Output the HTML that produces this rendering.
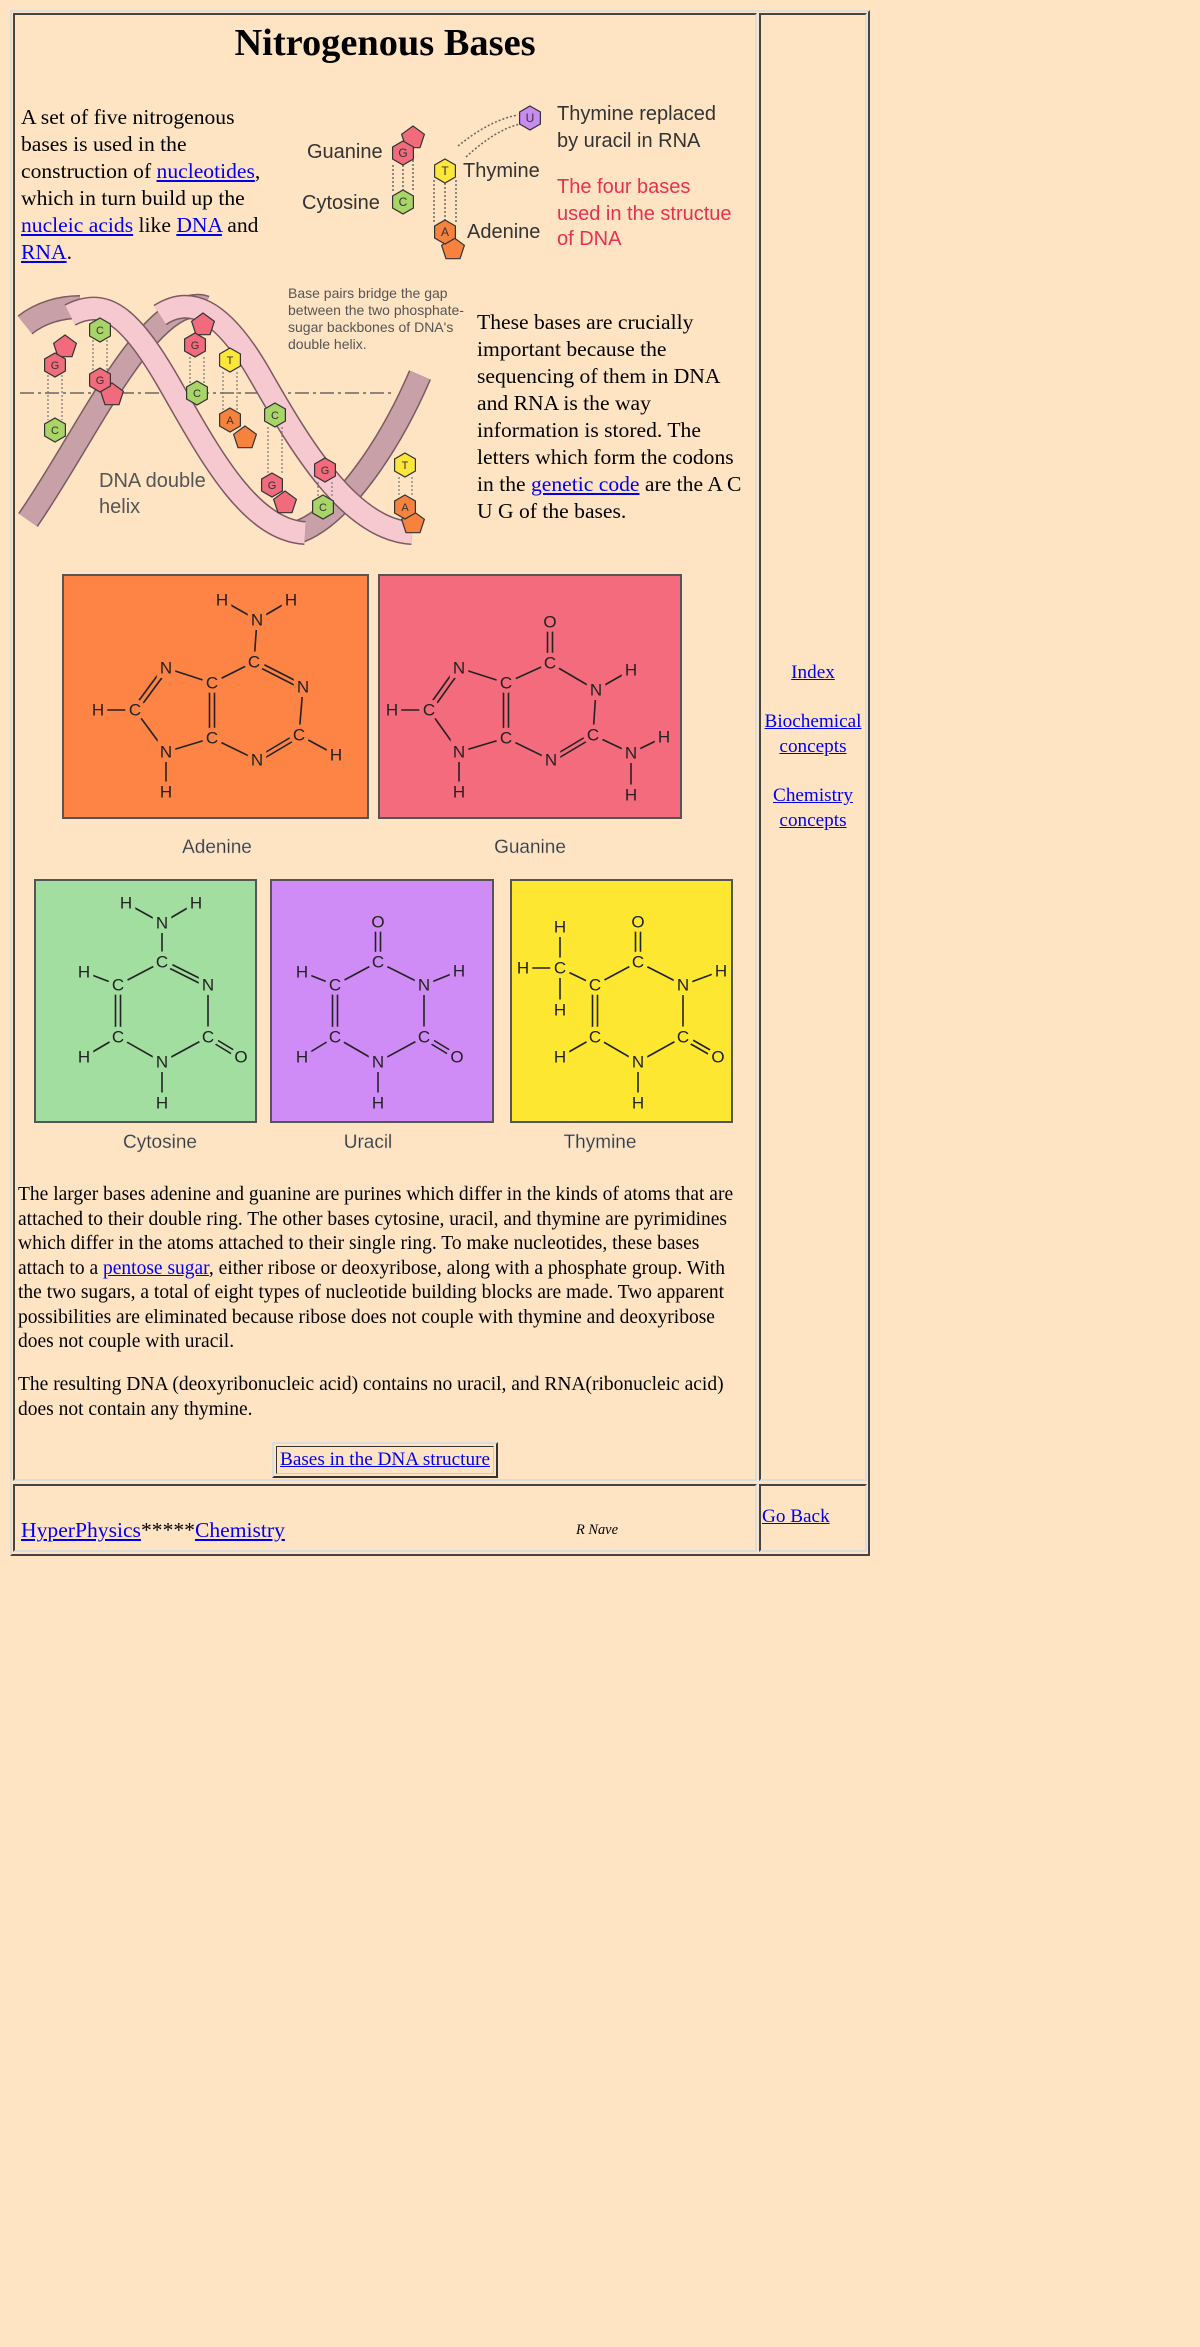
<!DOCTYPE html>
<html><head><meta charset="utf-8"><style>
html,body{margin:0;padding:0;background:#FFE4C4;}
body{width:1200px;height:2347px;position:relative;font-family:"Liberation Serif",serif;color:#000;overflow:hidden}
a{color:#0000EE;text-decoration:underline}
.abs{position:absolute;white-space:nowrap}
.outer{position:absolute;left:10px;top:10px;width:856px;height:1542px;border:2px solid;border-color:#dcdcdc #444 #444 #dcdcdc}
.cell{position:absolute;border:2px solid;border-color:#444 #dcdcdc #dcdcdc #444;box-sizing:border-box}
svg text{font-family:"Liberation Sans",sans-serif}
</style></head><body>
<div class="outer"></div>
<div class="cell" style="left:13px;top:13px;width:744px;height:1468px"></div>
<div class="cell" style="left:759px;top:13px;width:108px;height:1468px"></div>
<div class="cell" style="left:13px;top:1484px;width:744px;height:68px"></div>
<div class="cell" style="left:759px;top:1484px;width:108px;height:68px"></div>

<div class="abs" style="left:13px;width:744px;top:20px;text-align:center;font-size:38.4px;font-weight:bold;line-height:46px">Nitrogenous Bases</div>

<div class="abs" style="left:21px;top:104px;font-size:21.6px;line-height:27px">A set of five nitrogenous<br>bases is used in the<br>construction of <a>nucleotides</a>,<br>which in turn build up the<br><a>nucleic acids</a> like <a>DNA</a> and<br><a>RNA</a>.</div>

<div class="abs" style="left:477px;top:309px;font-size:21.6px;line-height:27px">These bases are crucially<br>important because the<br>sequencing of them in DNA<br>and RNA is the way<br>information is stored. The<br>letters which form the codons<br>in the <a>genetic code</a> are the A C<br>U G of the bases.</div>

<div class="abs" style="left:18px;top:1183px;font-size:19.5px;line-height:24.5px">The larger bases adenine and guanine are purines which differ in the kinds of atoms that are<br>attached to their double ring. The other bases cytosine, uracil, and thymine are pyrimidines<br>which differ in the atoms attached to their single ring. To make nucleotides, these bases<br>attach to a <a>pentose sugar</a>, either ribose or deoxyribose, along with a phosphate group. With<br>the two sugars, a total of eight types of nucleotide building blocks are made. Two apparent<br>possibilities are eliminated because ribose does not couple with thymine and deoxyribose<br>does not couple with uracil.</div>
<div class="abs" style="left:18px;top:1373px;font-size:19.5px;line-height:24.5px">The resulting DNA (deoxyribonucleic acid) contains no uracil, and RNA(ribonucleic acid)<br>does not contain any thymine.</div>

<div class="abs" style="left:272px;top:1442px;width:226px;height:36px;box-sizing:border-box;border:2px solid;border-color:#dcdcdc #333 #333 #dcdcdc"><div style="position:absolute;left:2px;top:2px;right:2px;bottom:2px;border:1px solid;border-color:#333 #ccc #ccc #333"></div></div>
<div class="abs" style="left:272px;width:226px;top:1448px;text-align:center;font-size:19.2px;line-height:24px"><a>Bases in the DNA structure</a></div>

<div class="abs" style="left:759px;width:108px;top:661px;text-align:center;font-size:19.2px;line-height:24.5px"><a>Index</a></div>
<div class="abs" style="left:759px;width:108px;top:710px;text-align:center;font-size:19.2px;line-height:24.5px"><a>Biochemical<br>concepts</a></div>
<div class="abs" style="left:759px;width:108px;top:784px;text-align:center;font-size:19.2px;line-height:24.5px"><a>Chemistry<br>concepts</a></div>

<div class="abs" style="left:21px;top:1516px;font-size:21.6px;line-height:28px"><a>HyperPhysics</a>*****<a>Chemistry</a></div>
<div class="abs" style="left:576px;top:1520px;font-size:14.4px;line-height:20px;font-style:italic">R Nave</div>
<div class="abs" style="left:762px;top:1505px;font-size:19.2px;line-height:24px"><a>Go Back</a></div>

<svg style="position:absolute;left:0;top:0" width="1200" height="1200" viewBox="0 0 1200 1200">
<defs>
<polygon id="hx" points="0,-12 10.4,-6 10.4,6 0,12 -10.4,6 -10.4,-6" stroke="#333" stroke-width="1.2"/>
<polygon id="pt" points="0,-12 11.4,-3.7 7,9.7 -7,9.7 -11.4,-3.7" stroke="#333" stroke-width="1.2"/>
</defs>
<g font-size="20" fill="#333">
<text x="307" y="158">Guanine</text>
<text x="302" y="209">Cytosine</text>
<text x="463" y="177">Thymine</text>
<text x="467" y="238">Adenine</text>
<text x="557" y="120">Thymine replaced</text>
<text x="557" y="147">by uracil in RNA</text>
<g fill="#e8304f"><text x="557" y="193">The four bases</text><text x="557" y="220">used in the structue</text><text x="557" y="245">of DNA</text></g>
</g>
<g stroke="#666" stroke-width="1.5" stroke-dasharray="2,2" fill="none">
<line x1="393" y1="165" x2="393" y2="192"/><line x1="403" y1="165" x2="403" y2="190"/><line x1="413" y1="160" x2="413" y2="192"/>
<line x1="434" y1="180" x2="434" y2="222"/><line x1="445" y1="183" x2="445" y2="220"/><line x1="456" y1="180" x2="456" y2="222"/>
<path d="M458 146 Q490 120 518 115"/><path d="M466 157 Q495 130 520 124"/>
</g>
<use href="#pt" x="413" y="138" fill="#f26b7c"/><use href="#hx" x="403" y="153" fill="#f26b7c"/>
<use href="#hx" x="403" y="202" fill="#a8d468"/>
<use href="#hx" x="445" y="171" fill="#fde63a"/>
<use href="#pt" x="453" y="249" fill="#f7823d"/><use href="#hx" x="445" y="232" fill="#f7823d"/>
<use href="#hx" x="530" y="118" fill="#c88cf0"/>
<g font-size="12" fill="#333" text-anchor="middle"><text x="403" y="157">G</text><text x="403" y="206">C</text><text x="445" y="175">T</text><text x="445" y="236">A</text><text x="530" y="122">U</text></g>

<g transform="translate(20,275)">
<line x1="0" y1="118" x2="375" y2="118" stroke="#666" stroke-width="1.5" stroke-dasharray="14,4,3,4"/>
<g fill="none" stroke-linecap="butt">
<path d="M5 50 C20 38 40 32 60 32" stroke="#7a5a60" stroke-width="24"/><path d="M5 50 C20 38 40 32 60 32" stroke="#c8a0a8" stroke-width="21"/>
<path d="M8 245 C60 170 110 60 160 35 C172 30 180 30 185 32" stroke="#7a5a60" stroke-width="24"/><path d="M8 245 C60 170 110 60 160 35 C172 30 180 30 185 32" stroke="#c8a0a8" stroke-width="21"/>
<path d="M275 258 C320 245 370 170 400 100" stroke="#7a5a60" stroke-width="24"/><path d="M275 258 C320 245 370 170 400 100" stroke="#c8a0a8" stroke-width="21"/>
<path d="M50 40 C85 22 110 40 150 110 S230 255 285 258" stroke="#7a5a60" stroke-width="24"/><path d="M50 40 C85 22 110 40 150 110 S230 255 285 258" stroke="#f6c8cf" stroke-width="21"/>
<path d="M140 40 C168 22 200 30 240 100 S330 255 392 258" stroke="#7a5a60" stroke-width="24"/><path d="M140 40 C168 22 200 30 240 100 S330 255 392 258" stroke="#f6c8cf" stroke-width="21"/>
</g>
<g stroke="#777" stroke-width="1.2" stroke-dasharray="2,2">
<line x1="28" y1="100" x2="28" y2="145"/><line x1="42" y1="100" x2="42" y2="145"/>
<line x1="73" y1="65" x2="73" y2="95"/><line x1="87" y1="65" x2="87" y2="95"/>
<line x1="170" y1="82" x2="170" y2="108"/><line x1="184" y1="82" x2="184" y2="108"/>
<line x1="203" y1="97" x2="203" y2="135"/><line x1="217" y1="97" x2="217" y2="135"/>
<line x1="248" y1="152" x2="248" y2="198"/><line x1="262" y1="152" x2="262" y2="198"/>
<line x1="298" y1="207" x2="298" y2="222"/><line x1="312" y1="207" x2="312" y2="222"/>
<line x1="379" y1="202" x2="379" y2="222"/><line x1="392" y1="202" x2="392" y2="222"/>
</g>
<use href="#pt" x="45" y="72" fill="#f26b7c"/><use href="#hx" x="35" y="90" fill="#f26b7c"/>
<use href="#hx" x="80" y="55" fill="#a8d468"/>
<use href="#pt" x="92" y="120" fill="#f26b7c"/><use href="#hx" x="80" y="105" fill="#f26b7c"/>
<use href="#hx" x="35" y="155" fill="#a8d468"/>
<use href="#pt" x="183" y="50" fill="#f26b7c"/><use href="#hx" x="175" y="70" fill="#f26b7c"/>
<use href="#hx" x="177" y="118" fill="#a8d468"/>
<use href="#hx" x="210" y="85" fill="#fde63a"/>
<use href="#pt" x="225" y="163" fill="#f7823d"/><use href="#hx" x="210" y="145" fill="#f7823d"/>
<use href="#hx" x="255" y="140" fill="#a8d468"/>
<use href="#pt" x="265" y="228" fill="#f26b7c"/><use href="#hx" x="252" y="210" fill="#f26b7c"/>
<use href="#hx" x="305" y="195" fill="#f26b7c"/>
<use href="#hx" x="303" y="232" fill="#a8d468"/>
<use href="#hx" x="385" y="190" fill="#fde63a"/>
<use href="#pt" x="393" y="248" fill="#f7823d"/><use href="#hx" x="385" y="232" fill="#f7823d"/>
<g font-size="11" fill="#333" text-anchor="middle">
<text x="35" y="94">G</text><text x="80" y="59">C</text><text x="80" y="109">G</text><text x="35" y="159">C</text><text x="175" y="74">G</text><text x="177" y="122">C</text><text x="210" y="89">T</text><text x="210" y="149">A</text><text x="255" y="144">C</text><text x="252" y="214">G</text><text x="305" y="199">G</text><text x="303" y="236">C</text><text x="385" y="194">T</text><text x="385" y="236">A</text>
</g>
<g font-size="14" fill="#555"><text x="268" y="23">Base pairs bridge the gap</text><text x="268" y="40">between the two phosphate-</text><text x="268" y="57">sugar backbones of DNA's</text><text x="268" y="74">double helix.</text></g>
<g font-size="20" fill="#555"><text x="79" y="212">DNA double</text><text x="79" y="238">helix</text></g>
</g>

<g font-size="17" fill="#222" text-anchor="middle" dominant-baseline="central" stroke-linecap="round">
<g transform="translate(63,575)">
<rect x="0" y="0" width="305" height="243" fill="#fd8444" stroke="#555" stroke-width="2"/>
<g stroke="#222" stroke-width="1.6">
<line x1="194" y1="45" x2="159" y2="25"/><line x1="194" y1="45" x2="228" y2="25"/><line x1="194" y1="45" x2="191" y2="87"/>
<line x1="190" y1="89" x2="239" y2="114"/><line x1="192" y1="85" x2="241" y2="110"/>
<line x1="240" y1="112" x2="236" y2="160"/><line x1="236" y1="160" x2="273" y2="180"/>
<line x1="237" y1="162" x2="195" y2="187"/><line x1="235" y1="158" x2="193" y2="183"/>
<line x1="194" y1="185" x2="149" y2="163"/>
<line x1="146.5" y1="108" x2="146.5" y2="163"/><line x1="151.5" y1="108" x2="151.5" y2="163"/>
<line x1="149" y1="108" x2="191" y2="87"/><line x1="149" y1="108" x2="103" y2="93"/>
<line x1="105" y1="94.5" x2="74" y2="136.5"/><line x1="101" y1="91.5" x2="70" y2="133.5"/>
<line x1="72" y1="135" x2="35" y2="135"/><line x1="72" y1="135" x2="103" y2="177"/>
<line x1="103" y1="177" x2="149" y2="163"/><line x1="103" y1="177" x2="103" y2="217"/>
</g>
<g stroke="#fd8444" stroke-width="9" paint-order="stroke">
<text x="159" y="25">H</text><text x="228" y="25">H</text><text x="194" y="45">N</text><text x="191" y="87">C</text><text x="240" y="112">N</text><text x="236" y="160">C</text><text x="273" y="180">H</text><text x="194" y="185">N</text><text x="149" y="163">C</text><text x="149" y="108">C</text><text x="103" y="93">N</text><text x="72" y="135">C</text><text x="35" y="135">H</text><text x="103" y="177">N</text><text x="103" y="217">H</text>
</g>
</g>
<g transform="translate(379,575)">
<rect x="0" y="0" width="302" height="243" fill="#f46b7d" stroke="#555" stroke-width="2"/>
<g stroke="#222" stroke-width="1.6">
<line x1="168.5" y1="47" x2="168.5" y2="87"/><line x1="173.5" y1="47" x2="173.5" y2="87"/>
<line x1="171" y1="88" x2="217" y2="115"/><line x1="217" y1="115" x2="252" y2="95"/>
<line x1="217" y1="115" x2="214" y2="160"/><line x1="214" y1="160" x2="252" y2="178"/>
<line x1="252" y1="178" x2="285" y2="162"/><line x1="252" y1="178" x2="252" y2="220"/>
<line x1="215" y1="162" x2="173" y2="187"/><line x1="213" y1="158" x2="171" y2="183"/>
<line x1="172" y1="185" x2="127" y2="163"/>
<line x1="124.5" y1="108" x2="124.5" y2="163"/><line x1="129.5" y1="108" x2="129.5" y2="163"/>
<line x1="127" y1="108" x2="171" y2="88"/><line x1="127" y1="108" x2="80" y2="93"/>
<line x1="82" y1="94.5" x2="52" y2="136.5"/><line x1="78" y1="91.5" x2="48" y2="133.5"/>
<line x1="50" y1="135" x2="13" y2="135"/><line x1="50" y1="135" x2="80" y2="177"/>
<line x1="80" y1="177" x2="127" y2="163"/><line x1="80" y1="177" x2="80" y2="217"/>
</g>
<g stroke="#f46b7d" stroke-width="9" paint-order="stroke">
<text x="171" y="47">O</text><text x="171" y="88">C</text><text x="217" y="115">N</text><text x="252" y="95">H</text><text x="214" y="160">C</text><text x="252" y="178">N</text><text x="285" y="162">H</text><text x="252" y="220">H</text><text x="172" y="185">N</text><text x="127" y="163">C</text><text x="127" y="108">C</text><text x="80" y="93">N</text><text x="50" y="135">C</text><text x="13" y="135">H</text><text x="80" y="177">N</text><text x="80" y="217">H</text>
</g>
</g>

<g transform="translate(35,880)">
<rect x="0" y="0" width="221" height="242" fill="#a2dea0" stroke="#555" stroke-width="2"/>
<g stroke="#222" stroke-width="1.6">
<line x1="127" y1="43" x2="91" y2="23"/><line x1="127" y1="43" x2="161" y2="23"/><line x1="127" y1="43" x2="127" y2="82"/>
<line x1="126" y1="84" x2="172" y2="107"/><line x1="128" y1="80" x2="174" y2="103"/>
<line x1="173" y1="105" x2="173" y2="157"/>
<line x1="172" y1="159" x2="205" y2="179"/><line x1="174" y1="155" x2="207" y2="175"/>
<line x1="173" y1="157" x2="127" y2="182"/><line x1="127" y1="182" x2="127" y2="223"/>
<line x1="127" y1="182" x2="83" y2="157"/><line x1="83" y1="157" x2="49" y2="177"/>
<line x1="80.5" y1="105" x2="80.5" y2="157"/><line x1="85.5" y1="105" x2="85.5" y2="157"/>
<line x1="83" y1="105" x2="49" y2="92"/><line x1="83" y1="105" x2="127" y2="82"/>
</g>
<g stroke="#a2dea0" stroke-width="9" paint-order="stroke">
<text x="91" y="23">H</text><text x="161" y="23">H</text><text x="127" y="43">N</text><text x="127" y="82">C</text><text x="173" y="105">N</text><text x="173" y="157">C</text><text x="206" y="177">O</text><text x="127" y="182">N</text><text x="127" y="223">H</text><text x="83" y="157">C</text><text x="49" y="177">H</text><text x="83" y="105">C</text><text x="49" y="92">H</text>
</g>
</g>
<g transform="translate(271,880)">
<rect x="0" y="0" width="222" height="242" fill="#d08cf6" stroke="#555" stroke-width="2"/>
<g stroke="#222" stroke-width="1.6">
<line x1="104.5" y1="42" x2="104.5" y2="82"/><line x1="109.5" y1="42" x2="109.5" y2="82"/>
<line x1="107" y1="82" x2="153" y2="105"/><line x1="153" y1="105" x2="188" y2="91"/>
<line x1="153" y1="105" x2="153" y2="157"/>
<line x1="152" y1="159" x2="185" y2="179"/><line x1="154" y1="155" x2="187" y2="175"/>
<line x1="153" y1="157" x2="107" y2="182"/><line x1="107" y1="182" x2="107" y2="223"/>
<line x1="107" y1="182" x2="64" y2="157"/><line x1="64" y1="157" x2="31" y2="177"/>
<line x1="61.5" y1="105" x2="61.5" y2="157"/><line x1="66.5" y1="105" x2="66.5" y2="157"/>
<line x1="64" y1="105" x2="31" y2="92"/><line x1="64" y1="105" x2="107" y2="82"/>
</g>
<g stroke="#d08cf6" stroke-width="9" paint-order="stroke">
<text x="107" y="42">O</text><text x="107" y="82">C</text><text x="153" y="105">N</text><text x="188" y="91">H</text><text x="153" y="157">C</text><text x="186" y="177">O</text><text x="107" y="182">N</text><text x="107" y="223">H</text><text x="64" y="157">C</text><text x="31" y="177">H</text><text x="64" y="105">C</text><text x="31" y="92">H</text>
</g>
</g>
<g transform="translate(511,880)">
<rect x="0" y="0" width="221" height="242" fill="#fee731" stroke="#555" stroke-width="2"/>
<g stroke="#222" stroke-width="1.6">
<line x1="124.5" y1="42" x2="124.5" y2="82"/><line x1="129.5" y1="42" x2="129.5" y2="82"/>
<line x1="127" y1="82" x2="172" y2="105"/><line x1="172" y1="105" x2="210" y2="91"/>
<line x1="172" y1="105" x2="172" y2="157"/>
<line x1="171" y1="159" x2="206" y2="179"/><line x1="173" y1="155" x2="208" y2="175"/>
<line x1="172" y1="157" x2="127" y2="182"/><line x1="127" y1="182" x2="127" y2="223"/>
<line x1="127" y1="182" x2="84" y2="157"/><line x1="84" y1="157" x2="49" y2="177"/>
<line x1="81.5" y1="105" x2="81.5" y2="157"/><line x1="86.5" y1="105" x2="86.5" y2="157"/>
<line x1="84" y1="105" x2="49" y2="88"/><line x1="84" y1="105" x2="127" y2="82"/>
<line x1="49" y1="88" x2="49" y2="47"/><line x1="49" y1="88" x2="49" y2="130"/><line x1="49" y1="88" x2="12" y2="88"/>
</g>
<g stroke="#fee731" stroke-width="9" paint-order="stroke">
<text x="127" y="42">O</text><text x="127" y="82">C</text><text x="172" y="105">N</text><text x="210" y="91">H</text><text x="172" y="157">C</text><text x="207" y="177">O</text><text x="127" y="182">N</text><text x="127" y="223">H</text><text x="84" y="157">C</text><text x="49" y="177">H</text><text x="84" y="105">C</text><text x="49" y="88">C</text><text x="49" y="47">H</text><text x="49" y="130">H</text><text x="12" y="88">H</text>
</g>
</g>
</g>
<g font-size="19" fill="#333" text-anchor="middle" stroke="#bbb" stroke-width="0.4">
<text x="217" y="853">Adenine</text><text x="530" y="853">Guanine</text>
<text x="160" y="1148">Cytosine</text><text x="368" y="1148">Uracil</text><text x="600" y="1148">Thymine</text>
</g>
</svg>
</body></html>
